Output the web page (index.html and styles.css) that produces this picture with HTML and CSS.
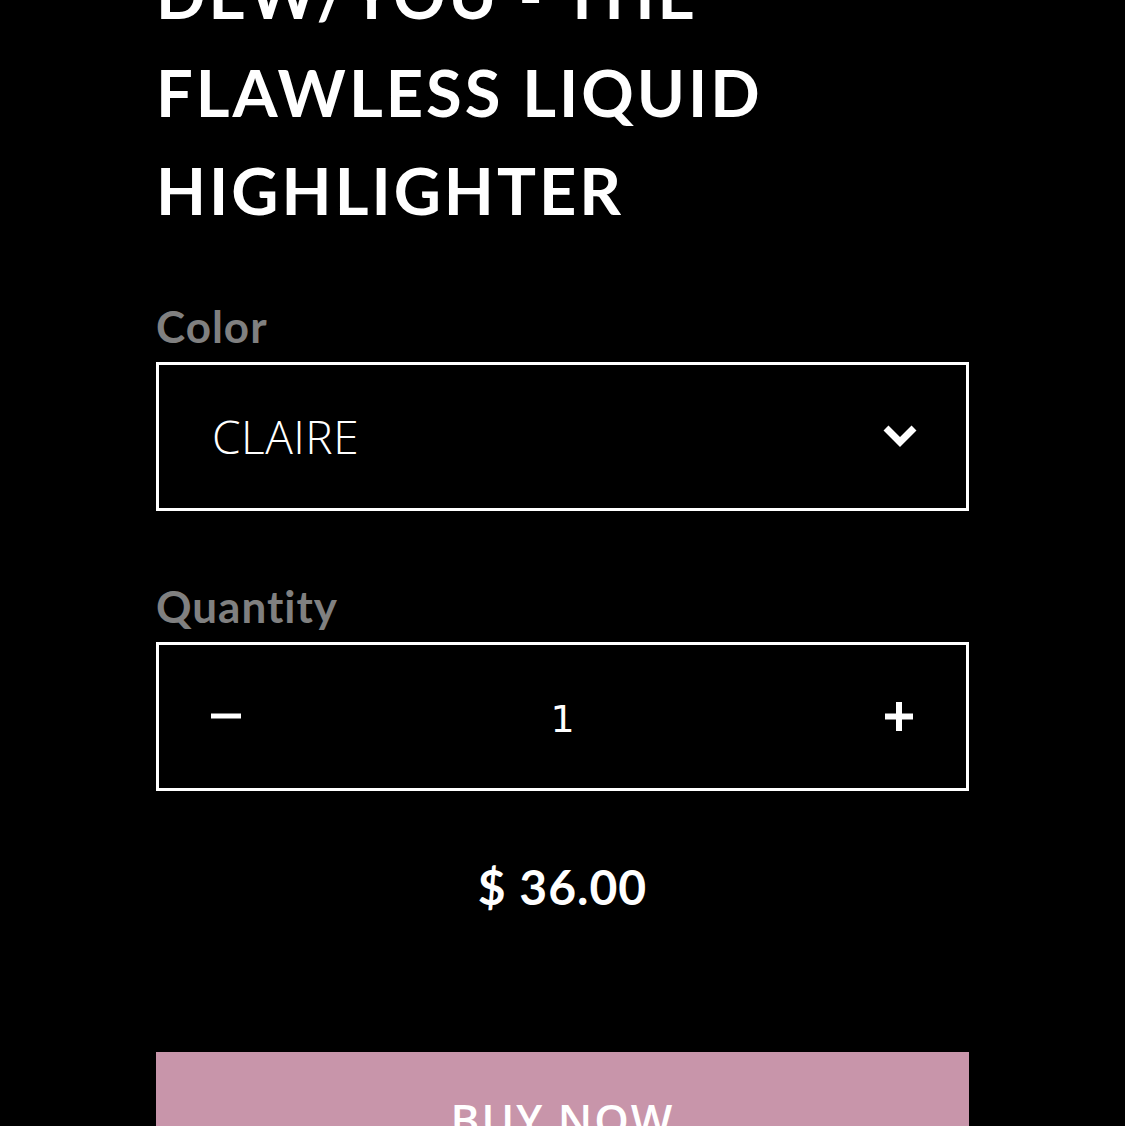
FILE: index.html
```html
<!DOCTYPE html>
<html>
<head>
    <title>Dew/You - The Flawless Liquid Highlighter</title>
    <meta charset="UTF-8">
    <meta name="viewport" content="width=device-width, initial-scale=1.0">
    <link rel="stylesheet" href="styles.css">
</head>
<body>
    <div class="product">
        <h1 class="product-title">DEW/YOU - THE FLAWLESS LIQUID HIGHLIGHTER</h1>

        <div class="field">
            <label class="field-label">Color</label>
            <div class="select-box">
                <span class="select-value">CLAIRE</span>
                <svg class="chevron" width="36" height="24" viewBox="0 0 36 24">
                    <polyline points="4,4 18,18 32,4" fill="none" stroke="#fff" stroke-width="7" stroke-linejoin="miter"/>
                </svg>
            </div>
        </div>

        <div class="field">
            <label class="field-label">Quantity</label>
            <div class="qty-box">
                <button class="qty-btn" onclick="changeQty(-1)">
                    <svg width="30" height="30" viewBox="0 0 30 30">
                        <rect x="0" y="12.5" width="30" height="5" fill="#fff"/>
                    </svg>
                </button>
                <span class="qty-value" id="qty">1</span>
                <button class="qty-btn" onclick="changeQty(1)">
                    <svg width="30" height="30" viewBox="0 0 30 30">
                        <rect x="1" y="12.5" width="28" height="6" fill="#fff"/>
                        <rect x="12" y="1" width="6" height="29" fill="#fff"/>
                    </svg>
                </button>
            </div>
        </div>

        <div class="price">$ 36.00</div>

        <button class="buy-btn">BUY NOW</button>
    </div>

    <script>
        function changeQty(delta) {
            const el = document.getElementById('qty');
            const next = Math.max(1, parseInt(el.textContent) + delta);
            el.textContent = next;
        }
    </script>
</body>
</html>
```

FILE: styles.css
```css
* {
    box-sizing: border-box;
    margin: 0;
    padding: 0;
}

body {
    background: #000;
    color: #fff;
    font-family: Lato, 'Open Sans', sans-serif;
    font-variant-ligatures: none;
    overflow: hidden;
}

.product {
    width: 813px;
    margin: 0 auto;
}

.product-title {
    margin-top: -55px;
    font-size: 65px;
    line-height: 98px;
    font-weight: 700;
    letter-spacing: 3px;
}

.field {
    margin-top: 61px;
}

.field + .field {
    margin-top: 69px;
}

.field-label {
    display: block;
    font-size: 44px;
    line-height: 1.2;
    font-weight: 700;
    color: #808080;
    letter-spacing: 1px;
    margin-bottom: 9px;
}

.select-box,
.qty-box {
    height: 149px;
    border: 3px solid #fff;
    display: flex;
    align-items: center;
    justify-content: space-between;
}

.select-box {
    padding: 0 48px 0 53px;
}

.select-value {
    font-family: 'Open Sans', sans-serif;
    font-weight: 300;
    font-size: 46px;
    letter-spacing: 0.5px;
}

.chevron {
    display: block;
}

.qty-box {
    padding: 0 52px;
}

.qty-btn {
    background: none;
    border: none;
    cursor: pointer;
    display: flex;
}

.qty-value {
    font-family: 'DejaVu Sans', sans-serif;
    font-size: 38px;
    font-weight: 400;
    padding-top: 6px;
}

.price {
    text-align: center;
    font-size: 48px;
    font-weight: 700;
    margin-top: 67px;
    letter-spacing: 1px;
}

.buy-btn {
    display: block;
    width: 100%;
    margin-top: 137px;
    padding: 41px 0 60px;
    background: #c895aa;
    border: none;
    color: #fff;
    font-family: 'Open Sans', sans-serif;
    font-size: 44px;
    line-height: 1.2;
    font-weight: 600;
    letter-spacing: 2px;
    text-align: center;
    cursor: pointer;
}
```
